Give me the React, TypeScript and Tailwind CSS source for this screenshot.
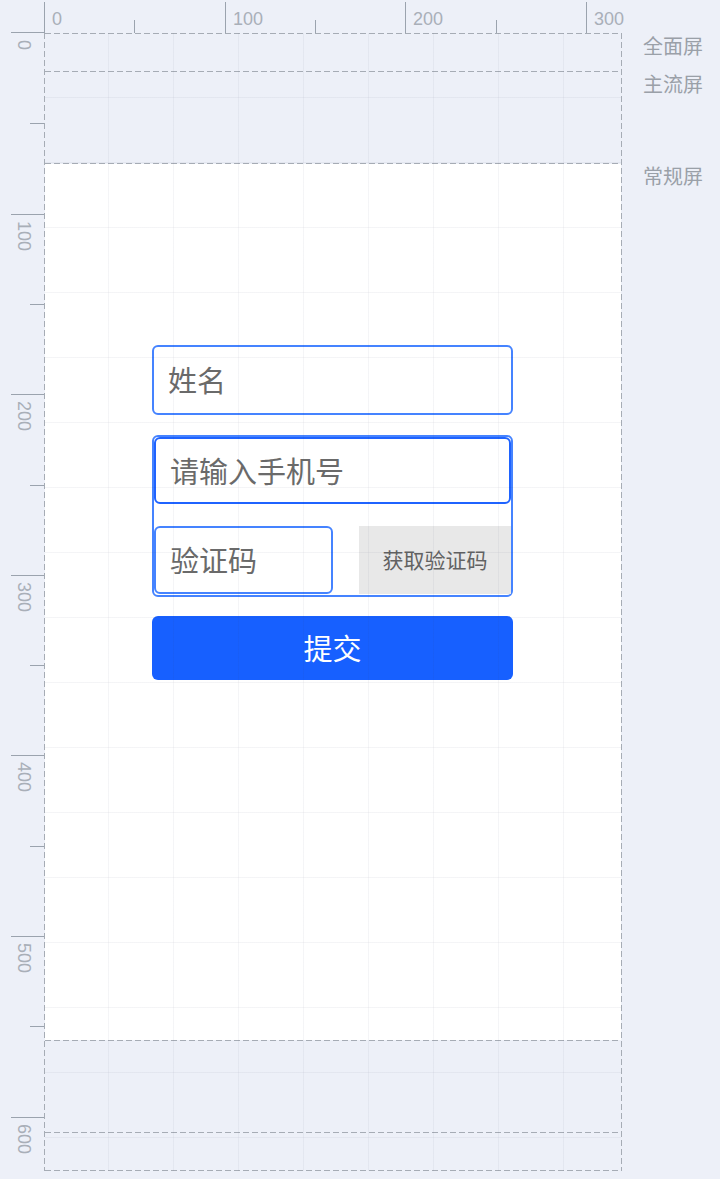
const CJK = "font-['Noto_Sans_CJK_SC','Noto_Sans',sans-serif]";
const NUM = "font-['Liberation_Sans','Noto_Sans',sans-serif]";

const STEP = 90.3;

function HDash() {
  return <div className="h-px w-full shrink-0 bg-[repeating-linear-gradient(to_right,#a6acb5_0_6px,transparent_6px_9px)]" />;
}

function VDash() {
  return <div className="w-px h-full shrink-0 bg-[repeating-linear-gradient(to_bottom,#a6acb5_0_6px,transparent_6px_9px)]" />;
}

function TopRuler() {
  const ticks = [0, 1, 2, 3, 4, 5, 6];
  return (
    <div className="relative h-[33px] w-full shrink-0">
      {/* corner tick of vertical ruler */}
      <div className="absolute left-[11px] top-[32px] h-px w-[34px] bg-[#9ba3ae]" />
      {ticks.map((i) => {
        const x = Math.round(44 + i * STEP);
        const major = i % 2 === 0;
        return (
          <div key={i}>
            <div
              className={major ? "absolute top-[2px] h-[31px] w-px bg-[#9ba3ae]" : "absolute top-[20px] h-[13px] w-px bg-[#9ba3ae]"}
              style={{ left: x }}
            />
            {major && (
              <div
                className={`absolute top-[8px] text-[18px] leading-[22px] text-[#a9afb8] ${NUM}`}
                style={{ left: x + 8 }}
              >
                {i * 50}
              </div>
            )}
          </div>
        );
      })}
    </div>
  );
}

function LeftRuler() {
  const ticks = Array.from({ length: 13 }, (_, i) => i);
  return (
    <div className="relative w-[44px] h-full shrink-0">
      {ticks.map((i) => {
        const y = Math.round(i * STEP);
        const major = i % 2 === 0;
        return (
          <div key={i}>
            {i > 0 && (
              <div
                className={major ? "absolute left-[11px] h-px w-[33px] bg-[#9ba3ae]" : "absolute left-[30px] h-px w-[14px] bg-[#9ba3ae]"}
                style={{ top: y }}
              />
            )}
            {major && (
              <div
                className={`absolute left-[13px] text-[18px] leading-[22px] text-[#a9afb8] [writing-mode:vertical-rl] ${NUM}`}
                style={{ top: y + 7 }}
              >
                {i * 50}
              </div>
            )}
          </div>
        );
      })}
    </div>
  );
}

function Form() {
  return (
    <div className={`ml-[107px] mt-[181px] flex w-[361px] flex-col ${CJK}`}>
      <div className="flex h-[70px] items-center rounded-[6px] border-2 border-[#4583ff] bg-white pl-[14px] text-[29px] text-[#6a6a6a]">
        姓名
      </div>

      <div className="mt-[20px] flex h-[162px] flex-col rounded-[6px] border-2 border-[#4583ff] bg-white">
        <div className="flex h-[67px] items-center rounded-[6px] border-2 border-[#1f63ff] pl-[14px] text-[29px] text-[#6a6a6a]">
          请输入手机号
        </div>
        <div className="mt-[22px] flex h-[68px] items-stretch justify-between">
          <div className="flex w-[179px] items-center rounded-[6px] border-2 border-[#4583ff] pl-[14px] text-[29px] text-[#6a6a6a]">
            验证码
          </div>
          <div className="flex w-[152px] items-center justify-center bg-[#e8e8e8] text-[21px] text-[#626262]">
            获取验证码
          </div>
        </div>
      </div>

      <div className="mt-[19px] flex h-[64px] items-center justify-center rounded-[6px] bg-[#1760ff] text-[29px] text-white">
        提交
      </div>
    </div>
  );
}

function Frame() {
  return (
    <div className="flex h-[1138px] w-[578px] shrink-0">
      <VDash />
      <div className="relative flex w-[576px] flex-col">
        <HDash />
        <div className="h-[37px]" />
        <HDash />
        <div className="h-[91px]" />
        <HDash />
        <div className="h-[876px] bg-white">
          <Form />
        </div>
        <HDash />
        <div className="h-[91px]" />
        <HDash />
        <div className="h-[37px]" />
        <HDash />
        {/* grid overlay */}
        <div className="pointer-events-none absolute inset-0 bg-[linear-gradient(to_right,transparent_63px,rgba(40,50,90,0.05)_63px,rgba(40,50,90,0.05)_64px,transparent_64px),linear-gradient(to_bottom,transparent_64px,rgba(40,50,90,0.05)_64px)] bg-[length:65px_65px]" />
      </div>
      <VDash />
    </div>
  );
}

function SideLabels() {
  return (
    <div className={`flex flex-col pl-[21px] text-[20px] leading-[24px] text-[#9aa0a8] ${CJK}`}>
      <div className="h-[38px] pt-[1px]">全面屏</div>
      <div className="h-[92px] pt-[1px]">主流屏</div>
      <div className="pt-[1px]">常规屏</div>
    </div>
  );
}

export default function App() {
  return (
    <div className="flex h-[1179px] w-[720px] flex-col overflow-hidden bg-[#edf0f8]">
      <TopRuler />
      <div className="flex h-[1146px]">
        <LeftRuler />
        <Frame />
        <SideLabels />
      </div>
    </div>
  );
}
